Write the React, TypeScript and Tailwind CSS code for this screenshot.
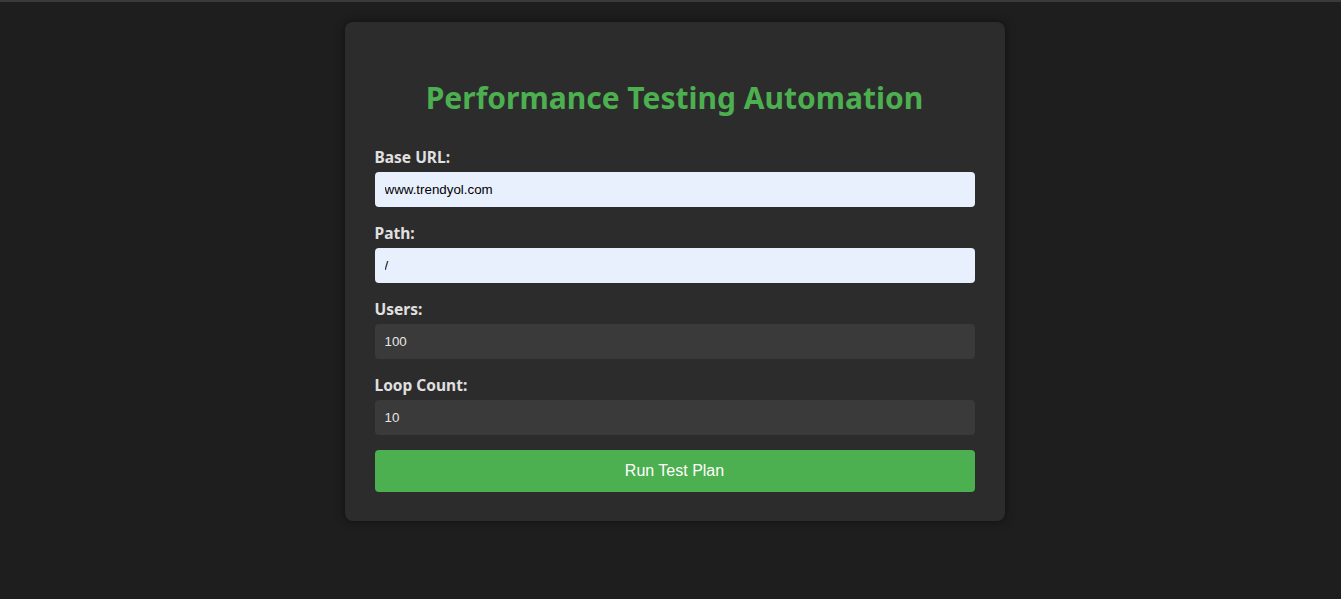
import { useState } from "react";

function Field({
  label,
  value,
  onChange,
  filled,
}: {
  label: string;
  value: string;
  onChange: (v: string) => void;
  filled?: boolean;
}) {
  return (
    <div className="flex flex-col">
      <label className="h-[18px] leading-[18px] text-[15.5px] font-bold text-[#e0e0e0] mb-[6px] font-['Noto_Sans',sans-serif]">
        {label}
      </label>
      <input
        value={value}
        onChange={(e) => onChange(e.target.value)}
        className={`h-[35px] w-full rounded-[4px] px-[10px] text-[13.33px] font-['Liberation_Sans',Arial,sans-serif] outline-none ${
          filled ? "bg-[#e8f0fe] text-black" : "bg-[#3a3a3a] text-[#e6e6e6]"
        }`}
      />
    </div>
  );
}

export default function App() {
  const [baseUrl, setBaseUrl] = useState("www.trendyol.com");
  const [path, setPath] = useState("/");
  const [users, setUsers] = useState("100");
  const [loops, setLoops] = useState("10");

  return (
    <div className="min-h-[599px] bg-[#1e1e1e] border-t-2 border-[#3a3a3a]">
      <div className="flex justify-center pt-[20px] pl-[8px]">
        <div className="w-[660px] rounded-[8px] bg-[#2c2c2c] px-[30px] pt-[30px] pb-[29px] shadow-[0_0_10px_rgba(0,0,0,0.5)]">
          <h1 className="mt-[22px] mb-[26px] h-[48px] leading-[48px] text-center text-[30px] font-bold text-[#4caf50] font-['Noto_Sans',sans-serif]">
            Performance Testing Automation
          </h1>
          <div className="flex flex-col gap-[17px]">
            <Field label="Base URL:" value={baseUrl} onChange={setBaseUrl} filled />
            <Field label="Path:" value={path} onChange={setPath} filled />
            <Field label="Users:" value={users} onChange={setUsers} />
            <Field label="Loop Count:" value={loops} onChange={setLoops} />
          </div>
          <button className="mt-[15px] h-[42px] w-full rounded-[4px] bg-[#4caf50] text-[16px] text-white font-['Liberation_Sans',Arial,sans-serif]">
            Run Test Plan
          </button>
        </div>
      </div>
    </div>
  );
}
